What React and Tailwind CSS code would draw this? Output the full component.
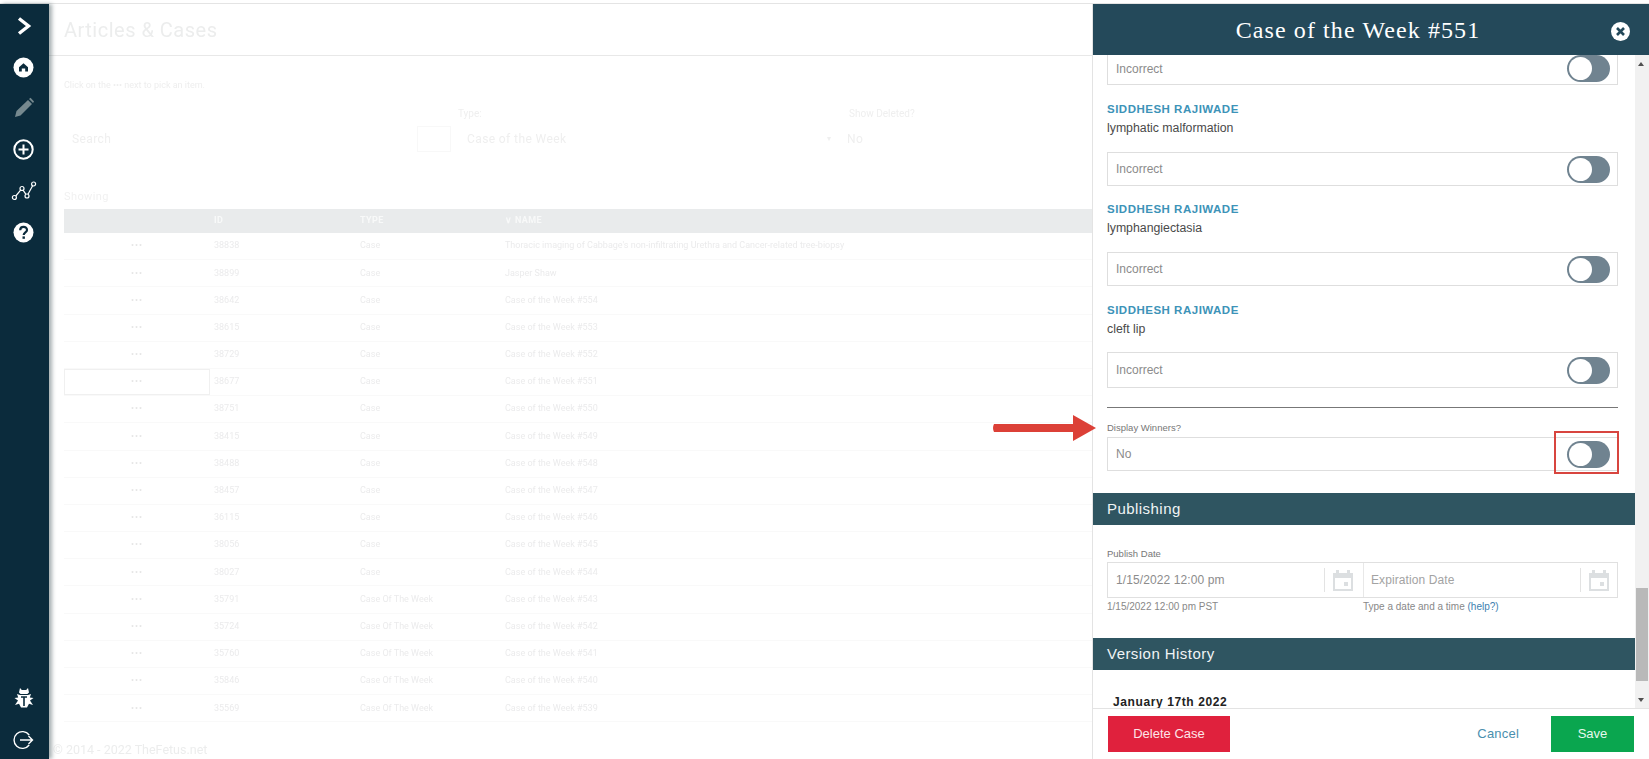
import React from "react";

const sans = "font-['Liberation_Sans',Arial,sans-serif]";

const rows = [
  ["38838", "Case", "Thoracic imaging of Cabbage's non-infiltrating Urethra and Cancer-related tree-biopsy"],
  ["38899", "Case", "Jasper Shaw"],
  ["38642", "Case", "Case of the Week #554"],
  ["38615", "Case", "Case of the Week #553"],
  ["38729", "Case", "Case of the Week #552"],
  ["38677", "Case", "Case of the Week #551"],
  ["38751", "Case", "Case of the Week #550"],
  ["38415", "Case", "Case of the Week #549"],
  ["38488", "Case", "Case of the Week #548"],
  ["38457", "Case", "Case of the Week #547"],
  ["36115", "Case", "Case of the Week #546"],
  ["38056", "Case", "Case of the Week #545"],
  ["38027", "Case", "Case of the Week #544"],
  ["35791", "Case Of The Week", "Case of the Week #543"],
  ["35724", "Case Of The Week", "Case of the Week #542"],
  ["35760", "Case Of The Week", "Case of the Week #541"],
  ["35846", "Case Of The Week", "Case of the Week #540"],
  ["35569", "Case Of The Week", "Case of the Week #539"],
];

const Chevron = () => (
  <svg width="16" height="20" viewBox="0 0 16 20"><path d="M3 2.5 L12.5 10 L3 17.5" fill="none" stroke="#fff" strokeWidth="3.4" /></svg>
);
const Home = () => (
  <svg width="21" height="21" viewBox="0 0 21 21"><circle cx="10.5" cy="10.5" r="10" fill="#fff" /><path d="M10.5 6.2 L15 10.2 V14.6 H12.2 V11.6 H8.8 V14.6 H6 V10.2 Z" fill="#0b2b3c" /></svg>
);
const Pencil = () => (
  <svg width="22" height="22" viewBox="0 0 22 22"><path d="M2 20 L3.5 14 L15 3 L19 7 L7.5 18.5 Z" fill="#76898f" /><path d="M16 2 L17.5 .8 L21 4.4 L20 6 Z" fill="#76898f" /></svg>
);
const Plus = () => (
  <svg width="21" height="21" viewBox="0 0 21 21"><circle cx="10.5" cy="10.5" r="9.2" fill="none" stroke="#fff" strokeWidth="2" /><path d="M10.5 5.5 V15.5 M5.5 10.5 H15.5" stroke="#fff" strokeWidth="2" /></svg>
);
const Chart = () => (
  <svg width="26" height="20" viewBox="0 0 26 20" fill="none" stroke="#fff" strokeWidth="1.2"><circle cx="3.4" cy="16.5" r="2" /><circle cx="11" cy="7.5" r="2" /><circle cx="16" cy="15" r="2" /><circle cx="22.6" cy="3" r="2" /><path d="M4.8 15 L9.6 9.2 M12.2 9.3 L14.8 13.2 M17 13.2 L21.6 4.8" /></svg>
);
const Help = () => (
  <svg width="21" height="21" viewBox="0 0 21 21"><circle cx="10.5" cy="10.5" r="10" fill="#fff" /><path d="M7.2 8.2 C7.2 3.9 14 3.9 14 8 C14 10.5 10.7 10.4 10.7 13" fill="none" stroke="#0b2b3c" strokeWidth="2.2" /><rect x="9.5" y="14.4" width="2.4" height="2.4" fill="#0b2b3c" /></svg>
);
const Bug = () => (
  <svg width="20" height="22" viewBox="0 0 20 22"><path d="M6 1 L7.8 3 H12.2 L14 1 L15 5.5 L13.4 7 H6.6 L5 5.5 Z" fill="#fff" /><path d="M3 7 L6 8 H14 L17 7 L15.8 10.5 L19.5 11 L16 13.5 L19 18 L15 16.8 L13 20.5 H7 L5 16.8 L1 18 L4 13.5 L.5 11 L4.2 10.5 Z" fill="#fff" /><path d="M7 10 H13 M10 10 V19" stroke="#0b2b3c" strokeWidth="1.6" /></svg>
);
const Logout = () => (
  <svg width="21" height="20" viewBox="0 0 21 20" fill="none" stroke="#fff" strokeWidth="1.4"><path d="M16.2 5 A8.4 8.4 0 1 0 16.2 15" /><path d="M7 10 H19.5 M15.5 6 L19.5 10 L15.5 14" /></svg>
);
const Close = () => (
  <svg width="19" height="19" viewBox="0 0 19 19"><circle cx="9.5" cy="9.5" r="9.5" fill="#fff" /><path d="M6 6 L13 13 M13 6 L6 13" stroke="#24495a" strokeWidth="2.6" /></svg>
);
const Calendar = () => (
  <svg width="20" height="22" viewBox="0 0 20 22"><path d="M0 4 H3 V1 H6 V4 H14 V1 H17 V4 H20 V22 H0 Z M2 9 V20 H18 V9 Z" fill="#dcdfe1" /><rect x="11" y="13" width="4" height="4" fill="#dcdfe1" /></svg>
);

const Toggle = () => (
  <span className="relative block h-[27px] w-[43px] rounded-full bg-[#708390]">
    <span className="absolute left-[2px] top-[2px] h-[23px] w-[23px] rounded-full bg-white" />
  </span>
);

const FieldRow = ({ label, className = "" }) => (
  <div className={`flex items-center justify-between border border-[#dedede] pl-[8px] pr-[7px] ${className}`}>
    <span className="text-[12px] leading-none text-[#8b8b8b]">{label}</span>
    <Toggle />
  </div>
);

const Person = ({ answer, className = "" }) => (
  <div className={className}>
    <div className="text-[11.5px] font-bold leading-[18px] tracking-[0.5px] text-[#3d93b8]">SIDDHESH RAJIWADE</div>
    <div className="text-[12.3px] leading-[20px] text-[#4a4a4a]">{answer}</div>
  </div>
);

const SectionBar = ({ children, className = "" }) => (
  <div className={`flex h-[32px] items-center bg-[#2f5561] pl-[14px] text-[15px] tracking-[0.45px] text-[#f0f4f5] ${className}`}>{children}</div>
);

const Sidebar = () => (
  <aside className="z-10 flex w-[49px] shrink-0 flex-col bg-[#0b2b3c] pt-[1px] shadow-[3px_0_4px_rgba(60,80,85,0.45)]">
    {[Chevron, Home, Pencil, Plus, Chart, Help].map((Icon, i) => (
      <div key={i} className="flex h-[41.4px] items-center justify-center pr-[2px]"><Icon /></div>
    ))}
    <div className="mt-auto flex h-[42px] items-center justify-center pr-[2px]"><Bug /></div>
    <div className="-mb-[2px] flex h-[42px] items-center justify-center pr-[2px]"><Logout /></div>
  </aside>
);

const Main = () => (
  <main className="relative flex min-w-0 flex-1 flex-col bg-white font-['Roboto',sans-serif] text-[#ebebec] blur-[0.4px]">
    <div className="flex h-[52px] shrink-0 items-center border-b border-[#e8e8e8] pl-[15px] text-[20px] tracking-[0.5px] text-[#eceded]">Articles &amp; Cases</div>
    <div className="pl-[15px] pt-[23px] text-[9px] leading-[12px] text-[#eeeeee]">Click on the ••• next to pick an item.</div>
    <div className="flex pl-[15px] pt-[16px] text-[10px] leading-[14px] text-[#efefef]">
      <div className="w-[394px]" />
      <div className="w-[391px]">Type:</div>
      <div>Show Deleted?</div>
    </div>
    <div className="flex h-[30px] items-center pl-[15px] pt-[5px] text-[12px] tracking-[0.4px] text-[#efefef]">
      <div className="w-[353px] pl-[8px]">Search</div>
      <div className="h-[26px] w-[34px] border border-[#f8f8f8]" />
      <div className="flex w-[391px] items-center justify-between pl-[16px] pr-[11px]">
        <span>Case of the Week</span>
        <span className="text-[8px]">▾</span>
      </div>
      <div className="pl-[5px]">No</div>
    </div>
    <div className="pl-[15px] pt-[39px] text-[11px] leading-[14px] tracking-[0.4px] text-[#f1f1f1]">Showing</div>
    <div className="ml-[15px] mt-[5px] w-[1028px] text-[9px]">
      <div className="grid h-[24px] grid-cols-[146px_146px_145px_1fr] items-center bg-[#e9ebec] font-bold tracking-[0.4px] text-[#f8f9f9]">
        <span />
        <span className="pl-[4px]">ID</span>
        <span className="pl-[4px]">TYPE</span>
        <span className="pl-[4px]">∨ NAME</span>
      </div>
      {rows.map(([id, type, name], i) => (
        <div key={id} className="grid h-[27.2px] grid-cols-[146px_146px_145px_1fr] items-center border-b border-[#f9f9f9]">
          <span className={`text-center text-[9px] tracking-[1px] text-[#e6e6e6] ${i === 5 ? "flex h-full items-center justify-center border border-[#f0f0f0]" : ""}`}>•••</span>
          <span className="pl-[4px]">{id}</span>
          <span className="pl-[4px]">{type}</span>
          <span className="truncate pl-[4px]">{name}</span>
        </div>
      ))}
    </div>
    <div className="absolute bottom-[1px] left-[4px] text-[12.5px] leading-[16px] text-[#eceded]">© 2014 - 2022 TheFetus.net</div>
  </main>
);

const Panel = () => (
  <section className={`flex w-[557px] shrink-0 flex-col border-l border-[#e3e3e3] bg-white ${sans}`}>
    <header className="relative flex h-[51px] shrink-0 items-center justify-center bg-[#24495a] pr-[26px] font-['Liberation_Serif',serif] text-[24px] tracking-[1.1px] text-white">
      Case of the Week #551
      <span className="absolute left-[518px] top-[18px]"><Close /></span>
    </header>
    <div className="flex min-h-0 flex-1">
      <div className="min-w-0 flex-1 overflow-hidden">
        <div className="pl-[14px] pr-[17px]">
          <FieldRow label="Incorrect" className="-mt-[3px] h-[33px]" />
          <Person answer="lymphatic malformation" className="mt-[15px]" />
          <FieldRow label="Incorrect" className="mt-[14px] h-[34px]" />
          <Person answer="lymphangiectasia" className="mt-[14px]" />
          <FieldRow label="Incorrect" className="mt-[14px] h-[34px]" />
          <Person answer="cleft lip" className="mt-[15px]" />
          <FieldRow label="Incorrect" className="mt-[13px] h-[36px]" />
          <div className="mt-[19px] h-[1px] bg-[#777]" />
          <div className="mt-[14px] text-[9.5px] leading-[12px] text-[#777]">Display Winners?</div>
          <div className="relative mt-[3px]">
            <FieldRow label="No" className="h-[34px]" />
            <span className="absolute -top-[6px] left-[447px] h-[43px] w-[65px] border-2 border-[#d8453f]" />
          </div>
        </div>
        <SectionBar className="mt-[22px]">Publishing</SectionBar>
        <div className="pl-[14px] pr-[17px]">
          <div className="mt-[23px] text-[9.5px] leading-[12px] text-[#777]">Publish Date</div>
          <div className="mt-[2px] flex h-[36px] border border-[#e0e0e0] text-[12px] tracking-[0.1px] text-[#8c8c8c]">
            <div className="flex w-[255px] items-center justify-between pl-[8px] pr-[10px]">
              <span>1/15/2022 12:00 pm</span>
              <span className="flex items-center gap-[8px]"><span className="h-[24px] w-[1px] bg-[#e3e3e3]" /><Calendar /></span>
            </div>
            <div className="flex flex-1 items-center justify-between border-l border-[#e8e8e8] pl-[7px] pr-[8px] text-[#a3a3a3]">
              <span>Expiration Date</span>
              <span className="flex items-center gap-[8px]"><span className="h-[24px] w-[1px] bg-[#e3e3e3]" /><Calendar /></span>
            </div>
          </div>
          <div className="mt-[2px] flex text-[10px] leading-[14px] text-[#888]">
            <div className="w-[256px]">1/15/2022 12:00 pm PST</div>
            <div>Type a date and a time <span className="text-[#3d7fb0]">(help?)</span></div>
          </div>
        </div>
        <SectionBar className="mt-[24px]">Version History</SectionBar>
        <div className="pl-[20px] pt-[24px] text-[12px] font-bold leading-[16px] tracking-[0.6px] text-[#222]">January 17th 2022</div>
      </div>
      <div className="relative w-[14px] shrink-0 bg-[#f1f1f1]">
        <span className="absolute left-[3px] top-[7px] h-0 w-0 border-x-[3.5px] border-b-[4px] border-x-transparent border-b-[#505050]" />
        <span className="absolute left-[1px] top-[533px] h-[93px] w-[12px] bg-[#b9b9b9]" />
        <span className="absolute bottom-[6px] left-[3px] h-0 w-0 border-x-[3.5px] border-t-[4px] border-x-transparent border-t-[#505050]" />
      </div>
    </div>
    <footer className="flex h-[51px] shrink-0 items-center border-t border-[#e3e3e3] pb-[1px] pl-[15px] pr-[15px] text-[13px]">
      <button className="h-[36px] w-[122px] bg-[#e0213d] text-[#fde4e8]">Delete Case</button>
      <span className="ml-auto mr-[32px] text-[13px] tracking-[0.2px] text-[#4a8fae]">Cancel</span>
      <button className="h-[36px] w-[83px] bg-[#0aa64f] text-[#e6f8ee]">Save</button>
    </footer>
  </section>
);

const Arrow = () => (
  <svg className="absolute left-[992px] top-[414px] z-20" width="105" height="28" viewBox="0 0 105 28">
    <path d="M2 10 H81 V1 L104 14 L81 27 V18 H2 Q0 14 2 10 Z" fill="#dc4037" />
  </svg>
);

export default function App() {
  return (
    <div className={`relative h-[759px] w-[1649px] overflow-hidden bg-white ${sans}`}>
      <div className="h-[4px] border-b border-[#e4e4e4]" />
      <div className="flex h-[755px]">
        <Sidebar />
        <Main />
        <Panel />
      </div>
      <Arrow />
    </div>
  );
}
